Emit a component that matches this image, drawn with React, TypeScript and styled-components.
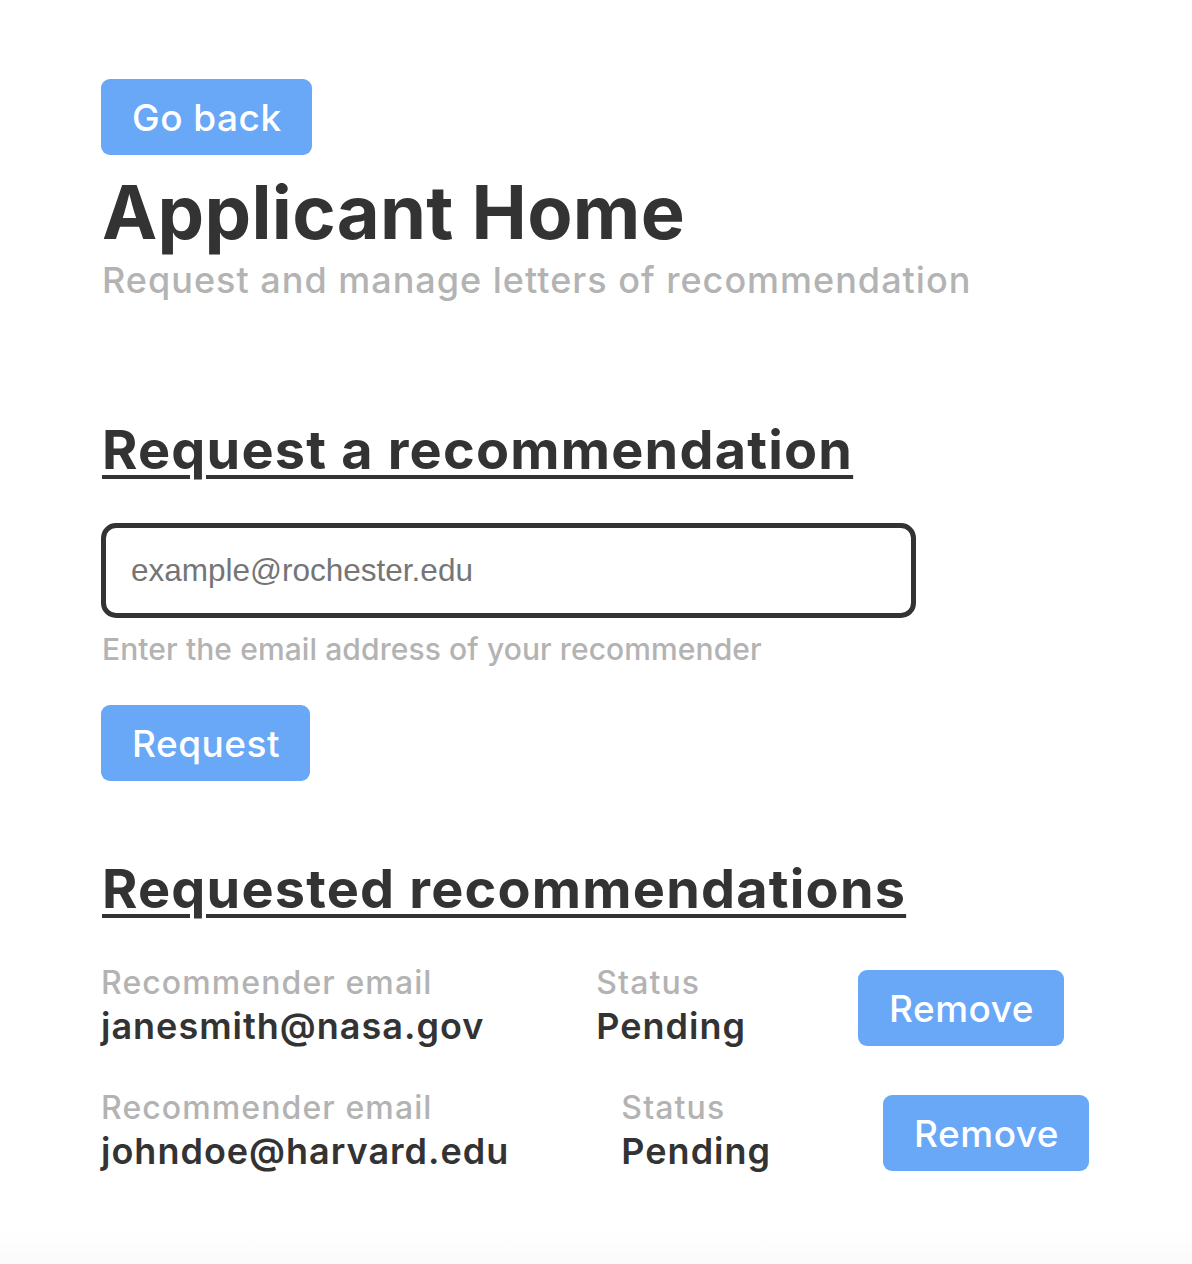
import React from "react";
import styled, { createGlobalStyle } from "styled-components";

const GlobalStyle = createGlobalStyle`
  html, body {
    margin: 0;
    padding: 0;
    background: #ffffff;
  }
  body {
    font-family: Inter, "Noto Sans", sans-serif;
    color: #333333;
    min-height: 1264px;
    background: linear-gradient(to bottom, #ffffff 0, #ffffff 1232px, #fafafa 1264px);
  }
`;

const Page = styled.main`
  display: flex;
  flex-direction: column;
  align-items: flex-start;
  padding: 79px 0 0 101px;
`;

const Button = styled.button`
  box-sizing: border-box;
  font-family: Inter, "Noto Sans", sans-serif;
  font-size: 37px;
  font-weight: 500;
  letter-spacing: 0.5px;
  color: #ffffff;
  background: #69a8f7;
  border: none;
  border-radius: 9px;
  height: 76px;
  padding: 0 30px 0 31px;
  cursor: pointer;
  flex-shrink: 0;
`;

const Title = styled.h1`
  margin: 17px 0 0 1px;
  font-size: 74px;
  font-weight: 700;
  line-height: 80px;
  color: #333333;
  letter-spacing: 0.3px;
`;

const Subtitle = styled.p`
  margin: 8px 0 0 1px;
  font-size: 36px;
  font-weight: 500;
  line-height: 40px;
  color: #b3b3b3;
  letter-spacing: 1px;
`;

const SectionTitle = styled.h2<{ $top: number }>`
  margin: ${(p) => p.$top}px 0 0 1px;
  font-size: 54px;
  font-weight: 700;
  line-height: 62px;
  color: #333333;
  letter-spacing: 1.2px;
  text-decoration: underline;
  text-decoration-thickness: 4px;
  text-underline-offset: 6px;
`;

const EmailInput = styled.input`
  box-sizing: border-box;
  margin-top: 42px;
  width: 815px;
  height: 95px;
  border: 5px solid #333333;
  border-radius: 15px;
  padding: 0 25px;
  font-family: "Liberation Sans", Arial, sans-serif;
  font-size: 31.5px;
  color: #333333;
  background: #ffffff;
  outline: none;
  &::placeholder {
    color: #757575;
  }
`;

const Helper = styled.p`
  margin: 13px 0 0 1px;
  font-size: 30px;
  font-weight: 500;
  line-height: 36px;
  color: #b3b3b3;
  letter-spacing: 0.1px;
`;

const RequestWrap = styled.div`
  margin-top: 38px;
`;

const List = styled.div`
  margin-top: 45px;
  display: flex;
  flex-direction: column;
  gap: 39px;
`;

const Row = styled.div`
  display: flex;
  align-items: center;
  gap: 112px;
`;

const Field = styled.div`
  display: flex;
  flex-direction: column;
`;

const Label = styled.span`
  font-size: 32px;
  font-weight: 500;
  line-height: 36px;
  color: #b3b3b3;
  letter-spacing: 1.1px;
`;

const Value = styled.span`
  font-size: 36px;
  font-weight: 600;
  line-height: 50px;
  color: #333333;
  letter-spacing: 1px;
`;

const rows = ["janesmith@nasa.gov", "johndoe@harvard.edu"];

export default function App() {
  return (
    <>
      <GlobalStyle />
      <Page>
        <Button>Go back</Button>
        <Title>Applicant Home</Title>
        <Subtitle>Request and manage letters of recommendation</Subtitle>

        <SectionTitle $top={119}>Request a recommendation</SectionTitle>
        <EmailInput type="email" placeholder="example@rochester.edu" />
        <Helper>Enter the email address of your recommender</Helper>
        <RequestWrap>
          <Button>Request</Button>
        </RequestWrap>

        <SectionTitle $top={77}>Requested recommendations</SectionTitle>
        <List>
          {rows.map((email) => (
            <Row key={email}>
              <Field>
                <Label>Recommender email</Label>
                <Value>{email}</Value>
              </Field>
              <Field>
                <Label>Status</Label>
                <Value>Pending</Value>
              </Field>
              <Button>Remove</Button>
            </Row>
          ))}
        </List>
      </Page>
    </>
  );
}
